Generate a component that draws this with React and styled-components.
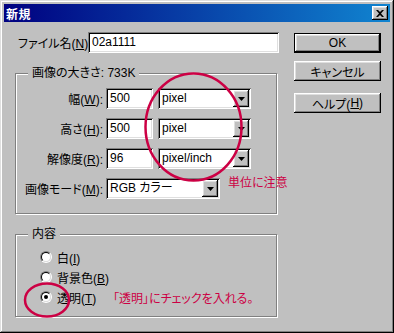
import React from 'react';
import styled, { createGlobalStyle } from 'styled-components';

const GlobalStyle = createGlobalStyle`
  html, body {
    margin: 0;
    padding: 0;
    background: #c0c0c0;
  }
  body {
    font-family: 'Liberation Sans', 'Noto Sans CJK JP', sans-serif;
    font-size: 12px;
    font-feature-settings: 'palt';
    color: #000;
  }
  u {
    text-underline-offset: 1px;
  }
`;

const raised = `
  box-shadow: inset -1px -1px #000, inset 1px 1px #fff, inset -2px -2px #808080, inset 2px 2px #dfdfdf;
`;

const sunken = `
  box-shadow: inset 1px 1px #808080, inset -1px -1px #fff, inset 2px 2px #000, inset -2px -2px #dfdfdf;
`;

export default function App() {
  return (
    <>
      <GlobalStyle />
      <Window>
        <TitleBar>
          <Title>新規</Title>
          <CloseButton>
            <svg width="8" height="7" viewBox="0 0 8 7">
              <path d="M0 0h2l2 2 2-2h2L5 3.5 8 7H6L4 5 2 7H0l3-3.5z" fill="#000" />
            </svg>
          </CloseButton>
        </TitleBar>
        <Body>
          <LeftColumn>
            <FileRow>
              <FileLabel>
                ファイル名(<u>N</u>):
              </FileLabel>
              <TextBox w={191}>02a1111</TextBox>
            </FileRow>

            <Group h={141}>
              <Legend>画像の大きさ: 733K</Legend>
              <Rows>
                <Row>
                  <RowLabel>
                    幅(<u>W</u>):
                  </RowLabel>
                  <TextBox w={47}>500</TextBox>
                  <Select w={93} value="pixel" />
                </Row>
                <Row>
                  <RowLabel>
                    高さ(<u>H</u>):
                  </RowLabel>
                  <TextBox w={47}>500</TextBox>
                  <Select w={93} value="pixel" />
                </Row>
                <Row>
                  <RowLabel>
                    解像度(<u>R</u>):
                  </RowLabel>
                  <TextBox w={47}>96</TextBox>
                  <Select w={93} value="pixel/inch" />
                </Row>
                <Row>
                  <RowLabel>
                    画像モード(<u>M</u>):
                  </RowLabel>
                  <Select w={114} value="RGB カラー" flush />
                </Row>
              </Rows>
              <UnitNote>単位に注意</UnitNote>
            </Group>

            <Group h={83}>
              <Legend>内容</Legend>
              <RadioList>
                <RadioRow>
                  <Radio />
                  <RadioLabel>
                    白(<u>I</u>)
                  </RadioLabel>
                </RadioRow>
                <RadioRow>
                  <Radio />
                  <RadioLabel>
                    背景色(<u>B</u>)
                  </RadioLabel>
                </RadioRow>
                <RadioRow>
                  <Radio checked />
                  <RadioLabel>
                    透明(<u>T</u>)
                  </RadioLabel>
                  <Note>「透明」にチェックを入れる。</Note>
                </RadioRow>
              </RadioList>
            </Group>
          </LeftColumn>

          <RightColumn>
            <Button isDefault>OK</Button>
            <Button>キャンセル</Button>
            <Button gap={12}>
              ヘルプ(<u>H</u>)
            </Button>
          </RightColumn>
        </Body>

        <Marks width="394" height="333" viewBox="0 0 394 333">
          <ellipse cx="193.5" cy="127" rx="48" ry="53.5" fill="none" stroke="#cc0044" strokeWidth="2.5" />
          <ellipse cx="47" cy="300" rx="22" ry="16.5" fill="none" stroke="#cc0044" strokeWidth="2.5" />
        </Marks>
      </Window>
    </>
  );
}

function Select({ w, value, flush }) {
  return (
    <SelectBox w={w} flush={flush}>
      <SelectValue>{value}</SelectValue>
      <DropButton>
        <svg width="7" height="4" viewBox="0 0 7 4">
          <path d="M0 0h7L3.5 4z" fill="#000" />
        </svg>
      </DropButton>
    </SelectBox>
  );
}

const Window = styled.div`
  position: relative;
  width: 394px;
  height: 333px;
  box-sizing: border-box;
  padding: 4px;
  background: #c0c0c0;
  box-shadow: inset -1px -1px #000, inset 1px 1px #dfdfdf, inset -2px -2px #808080, inset 2px 2px #fff;
  display: flex;
  flex-direction: column;
  overflow: hidden;
`;

const TitleBar = styled.div`
  height: 18px;
  display: flex;
  align-items: center;
  justify-content: space-between;
  padding: 0 2px 0 2px;
  background: linear-gradient(to right, #000080, #1084d0);
`;

const Title = styled.span`
  color: #fff;
  font-weight: bold;
  font-size: 12px;
  letter-spacing: 0.5px;
`;

const CloseButton = styled.div`
  width: 16px;
  height: 14px;
  display: flex;
  align-items: center;
  justify-content: center;
  background: #c0c0c0;
  ${raised}
`;

const Body = styled.div`
  display: flex;
  gap: 15px;
  padding: 10px 0 0 11px;
`;

const LeftColumn = styled.div`
  width: 264px;
  display: flex;
  flex-direction: column;
`;

const RightColumn = styled.div`
  width: 87px;
  padding-top: 1px;
  display: flex;
  flex-direction: column;
`;

const FileRow = styled.div`
  display: flex;
  align-items: center;
  height: 21px;
`;

const FileLabel = styled.span`
  width: 73px;
  padding-left: 3px;
  box-sizing: border-box;
  white-space: nowrap;
`;

const TextBox = styled.div`
  width: ${(p) => p.w}px;
  height: 21px;
  box-sizing: border-box;
  padding: 3px 0 0 4px;
  line-height: 15px;
  background: #fff;
  ${sunken}
`;

const Group = styled.div`
  position: relative;
  margin-top: 20px;
  width: 262px;
  height: ${(p) => p.h}px;
  box-sizing: border-box;
  border: 1px solid #808080;
  box-shadow: inset 1px 1px #fff, 1px 1px #fff;
`;

const Legend = styled.span`
  position: absolute;
  top: -8px;
  left: 12px;
  padding: 0 4px;
  line-height: 14px;
  background: #c0c0c0;
  white-space: nowrap;
`;

const Rows = styled.div`
  display: flex;
  flex-direction: column;
  gap: 9px;
  padding-top: 14px;
`;

const Row = styled.div`
  display: flex;
  align-items: center;
  height: 21px;
`;

const RowLabel = styled.span`
  width: 87px;
  margin-right: 3px;
  text-align: right;
  white-space: nowrap;
`;

const SelectBox = styled.div`
  width: ${(p) => p.w}px;
  height: 21px;
  margin-left: ${(p) => (p.flush ? 0 : 5)}px;
  box-sizing: border-box;
  padding: 2px;
  display: flex;
  background: #fff;
  ${sunken}
`;

const SelectValue = styled.span`
  flex: 1;
  padding: 1px 0 0 2px;
  line-height: 15px;
  white-space: nowrap;
  overflow: hidden;
`;

const DropButton = styled.div`
  width: 16px;
  height: 17px;
  display: flex;
  align-items: center;
  justify-content: center;
  background: #c0c0c0;
  ${raised}
`;

const UnitNote = styled.span`
  position: absolute;
  left: 212px;
  top: 102px;
  line-height: 14px;
  color: #cc0044;
  white-space: nowrap;
`;

const RadioList = styled.div`
  display: flex;
  flex-direction: column;
  padding: 12px 0 0 24px;
`;

const RadioRow = styled.div`
  display: flex;
  align-items: center;
  height: 20px;
`;

const Radio = styled.span`
  position: relative;
  width: 12px;
  height: 12px;
  box-sizing: border-box;
  border-radius: 50%;
  border: 1px solid;
  border-color: #808080 #fff #fff #808080;
  margin-right: 5px;
  &::before {
    content: '';
    position: absolute;
    inset: 0;
    border-radius: 50%;
    border: 1px solid;
    border-color: #000 #dfdfdf #dfdfdf #000;
    background: #fff;
  }
  &::after {
    content: '';
    position: absolute;
    left: 3px;
    top: 3px;
    width: 4px;
    height: 4px;
    border-radius: 50%;
    background: #000;
    display: ${(p) => (p.checked ? 'block' : 'none')};
  }
`;

const RadioLabel = styled.span`
  width: 56px;
  white-space: nowrap;
`;

const Note = styled.span`
  color: #cc0044;
  white-space: nowrap;
`;

const Button = styled.div`
  width: 87px;
  height: 20px;
  margin-top: ${(p) => (p.isDefault ? 0 : p.gap || 8)}px;
  box-sizing: border-box;
  display: flex;
  align-items: center;
  justify-content: center;
  background: #c0c0c0;
  ${(p) =>
    p.isDefault
      ? `border: 1px solid #000;
  box-shadow: inset -1px -1px #000, inset 1px 1px #fff, inset -2px -2px #808080, inset 2px 2px #dfdfdf;`
      : raised}
`;

const Marks = styled.svg`
  position: absolute;
  left: 0;
  top: 0;
  pointer-events: none;
`;
